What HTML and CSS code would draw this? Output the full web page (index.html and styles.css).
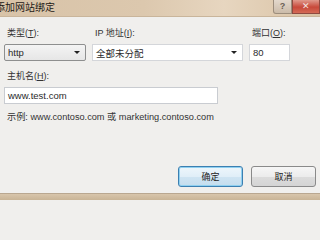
FILE: index.html
```html
<!DOCTYPE html>
<html lang="zh">
<head>
<meta charset="utf-8">
<link rel="stylesheet" href="styles.css">
</head>
<body>
<div class="window">
  <div class="titlebar">
    <span class="title">添加网站绑定</span>
    <div class="caption-buttons">
      <span class="btn-help">?</span>
      <span class="btn-close">✕</span>
    </div>
  </div>
  <div class="content">
    <div class="row1">
      <div class="field">
        <label class="lbl">类型(<u>T</u>):</label>
        <div class="combo combo-list"><span>http</span><span class="arrow"></span></div>
      </div>
      <div class="field">
        <label class="lbl">IP 地址(<u>I</u>):</label>
        <div class="combo combo-edit"><span>全部未分配</span><span class="arrow"></span></div>
      </div>
      <div class="field">
        <label class="lbl">端口(<u>O</u>):</label>
        <div class="textbox"><span>80</span></div>
      </div>
    </div>
    <div class="field host">
      <label class="lbl">主机名(<u>H</u>):</label>
      <div class="textbox host-box"><span>www.test.com</span></div>
    </div>
    <div class="example">示例: www.contoso.com 或 marketing.contoso.com</div>
    <div class="footer">
      <button class="button default">确定</button>
      <button class="button">取消</button>
    </div>
  </div>
  <div class="frame-bottom"></div>
</div>
</body>
</html>
```

FILE: styles.css
```css
html, body {
  margin: 0;
  padding: 0;
  width: 320px;
  height: 200px;
  overflow: hidden;
  background: #f0efed;
}
.window {
  width: 320px;
  height: 200px;
  display: flex;
  flex-direction: column;
  font-family: "Liberation Sans", "Noto Sans CJK SC", sans-serif;
  font-size: 9px;
  color: #2e2e2e;
}
.titlebar {
  height: 16px;
  flex: none;
  display: flex;
  justify-content: space-between;
  align-items: flex-start;
  background: linear-gradient(90deg, #d8c3a8 0%, #dcc8ae 45%, #e7d6c0 70%, #d9c2a4 100%);
  border-bottom: 1px solid #c9b59b;
  overflow: hidden;
}
.title {
  margin-left: -5px;
  margin-top: 2px;
  font-size: 10px;
  line-height: 12px;
  color: #1e1a16;
}
.caption-buttons {
  display: flex;
  height: 14px;
}
.btn-help {
  width: 19px;
  height: 14px;
  box-sizing: border-box;
  border: 1px solid #9c8d7c;
  border-top: none;
  border-radius: 0 0 0 3px;
  background: linear-gradient(#e3d8cc, #cbbba9);
  color: #6b5f54;
  font-size: 9px;
  font-weight: bold;
  line-height: 13px;
  text-align: center;
}
.btn-close {
  width: 28px;
  height: 14px;
  box-sizing: border-box;
  border: 1px solid #8f4a40;
  border-top: none;
  background: linear-gradient(#e09a8c, #c8493a 55%, #d46a56);
  color: #f4e6e2;
  font-size: 9px;
  line-height: 13px;
  text-align: center;
}
.content {
  flex: 1;
  display: flex;
  flex-direction: column;
  padding: 11px 4px 0 4px;
  background: #f0efed;
}
.row1 {
  display: grid;
  grid-template-columns: 82px 151px 41px;
  column-gap: 6px;
}
.field {
  display: flex;
  flex-direction: column;
}
.lbl {
  line-height: 11px;
  height: 11px;
  margin-left: 3px;
  margin-bottom: 5px;
  color: #333;
}
.lbl u {
  text-decoration: underline;
}
.combo, .textbox {
  height: 17px;
  box-sizing: border-box;
  display: flex;
  align-items: center;
  justify-content: space-between;
  padding: 0 5px 0 3px;
  font-size: 9.5px;
  color: #2a2a2a;
}
.combo-list {
  border: 1px solid #8e8f8f;
  border-radius: 2px;
  background: linear-gradient(#f4f4f4, #e6e6e6);
}
.combo-edit {
  border: 1px solid #d4d6da;
  background: #ffffff;
}
.textbox {
  border: 1px solid #d4d6da;
  background: #ffffff;
}
.arrow {
  width: 0;
  height: 0;
  border-left: 3px solid transparent;
  border-right: 3px solid transparent;
  border-top: 3px solid #222;
}
.host {
  margin-top: 10px;
}
.host-box {
  width: 214px;
  border-color: #c9ccd1;
}
.example {
  margin-top: 8px;
  margin-left: 3px;
  line-height: 11px;
  font-size: 9.2px;
  color: #333;
}
.footer {
  margin-top: auto;
  margin-bottom: 6px;
  display: flex;
  justify-content: flex-end;
  gap: 8px;
}
.button {
  width: 65px;
  height: 21px;
  box-sizing: border-box;
  border: 1px solid #8a8a8a;
  border-radius: 3px;
  background: linear-gradient(#f6f6f6 0%, #ececec 50%, #dcdcdc 51%, #d4d4d4 100%);
  font-family: "Liberation Sans", "Noto Sans CJK SC", sans-serif;
  font-size: 9px;
  color: #222;
  padding: 0;
}
.button.default {
  border-color: #3c7fb1;
  box-shadow: inset 0 0 0 1px #8fd0f0;
  background: linear-gradient(#eef6fb 0%, #e0eef8 50%, #cfe4f2 51%, #c4ddee 100%);
}
.frame-bottom {
  height: 6px;
  flex: none;
  border-top: 1px solid #b9a790;
  background: linear-gradient(#d8c5ab, #c9b496);
}
```
